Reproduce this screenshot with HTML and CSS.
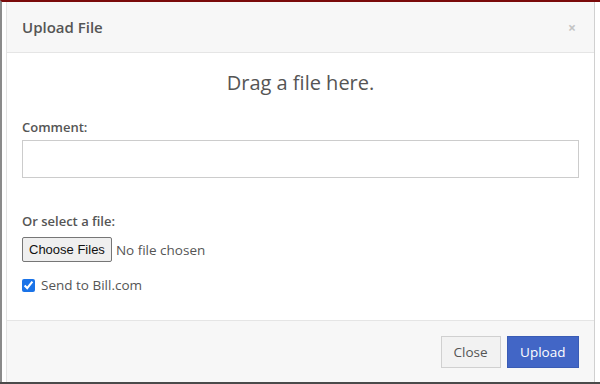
FILE: index.html
```html
<!DOCTYPE html>
<html lang="en">
<head>
<meta charset="UTF-8">
<title>Upload File</title>
<link rel="stylesheet" href="styles.css">
</head>
<body>
<div class="frame">
    <div class="modal">
        <div class="modal-header">
            <h4 class="modal-title">Upload File</h4>
            <span class="close">&times;</span>
        </div>
        <div class="modal-body">
            <div class="dropzone">Drag a file here.</div>
            <label class="label">Comment:</label>
            <input type="text" class="comment">
            <label class="label select-label">Or select a file:</label>
            <div class="file-row">
                <button class="file-btn">Choose Files</button>
                <span class="file-name">No file chosen</span>
            </div>
            <label class="check-row">
                <input type="checkbox" checked>
                <span>Send to Bill.com</span>
            </label>
        </div>
        <div class="modal-footer">
            <button class="btn btn-default">Close</button>
            <button class="btn btn-primary">Upload</button>
        </div>
    </div>
</div>
</body>
</html>
```

FILE: styles.css
```css
body {
  margin: 0;
  font-family: 'Open Sans', 'Noto Sans', sans-serif;
  background-color: #4a4a4a;
  color: #555;
}

.frame {
  height: 382px;
  border-top: 2px solid #7a0a0a;
  border-left: 2px solid #8a8a8a;
  padding: 0 5px 0 4px;
  box-sizing: border-box;
  display: flex;
  flex-direction: column;
  overflow: hidden;
  background-color: #fff;
}

.modal {
  flex: 1;
  display: flex;
  flex-direction: column;
  background-color: #fff;
  border-left: 1px solid #e3e3e3;
  border-right: 1px solid #d0d0d0;
}

.modal-header {
  height: 50px;
  display: flex;
  align-items: center;
  justify-content: space-between;
  padding: 0 18px 0 15px;
  background-color: #f7f7f7;
  border-bottom: 1px solid #e5e5e5;
}

.modal-title {
  margin: 0;
  font-size: 15px;
  font-weight: 600;
  color: #555;
}

.close {
  font-size: 14px;
  font-weight: 700;
  color: #c4c4c4;
}

.modal-body {
  flex: 1;
  padding: 16px 15px 0 15px;
}

.dropzone {
  text-align: center;
  font-size: 20px;
  color: #555;
  line-height: 28px;
}

.label {
  display: block;
  font-size: 13px;
  font-weight: 600;
  color: #555;
  margin-top: 21px;
  line-height: 18px;
}

.comment {
  display: block;
  width: 100%;
  height: 38px;
  box-sizing: border-box;
  margin-top: 4px;
  border: 1px solid #ccc;
  outline: none;
}

.select-label {
  margin-top: 34px;
}

.file-row {
  display: flex;
  align-items: center;
  margin-top: 7px;
}

.file-btn {
  font-family: 'Liberation Sans', Arial, sans-serif;
  font-size: 13px;
  color: #111;
  background-color: #efefef;
  border: 1px solid #767676;
  border-radius: 2px;
  height: 25px;
  padding: 0 6px;
}

.file-name {
  font-size: 13.5px;
  color: #555;
  margin-left: 4px;
}

.check-row {
  display: flex;
  align-items: center;
  margin-top: 14px;
  font-size: 13.5px;
  color: #555;
}

.check-row input {
  margin: 0 6px 0 0;
  width: 13px;
  height: 13px;
  accent-color: #1a73e8;
}

.modal-footer {
  height: 61px;
  display: flex;
  align-items: center;
  justify-content: flex-end;
  gap: 6px;
  padding: 0 15px;
  background-color: #f7f7f7;
  border-top: 1px solid #e5e5e5;
}

.btn {
  font-family: 'Open Sans', 'Noto Sans', sans-serif;
  font-size: 13.5px;
  height: 32px;
  padding: 0 12px;
  border: 1px solid;
}

.btn-default {
  background-color: #f2f2f2;
  border-color: #d0d0d0;
  color: #555;
}

.btn-primary {
  background-color: #4266c6;
  border-color: #3a5cb5;
  color: #fff;
  padding: 0 12.5px;
}
```
